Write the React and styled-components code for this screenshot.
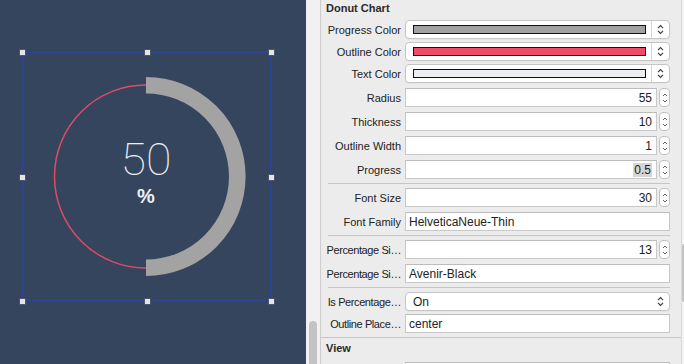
import styled, { createGlobalStyle } from "styled-components";

const GlobalStyle = createGlobalStyle`
  html, body {
    margin: 0;
    padding: 0;
    width: 684px;
    height: 364px;
    overflow: hidden;
  }
  body {
    font-family: "Liberation Sans", Arial, sans-serif;
    color: #262626;
  }
`;

const Window = styled.div`
  display: flex;
  width: 684px;
  height: 364px;
  overflow: hidden;
`;

/* ---------- canvas ---------- */

const Canvas = styled.div`
  width: 306px;
  flex-shrink: 0;
  background: #35455e;
  padding: 52px 0 0 22px;
  box-sizing: border-box;
`;

const Frame = styled.div`
  position: relative;
  width: 249px;
  height: 249px;
  box-shadow: inset 0 0 0 1px #2c4595;
`;

const Handle = styled.span`
  position: absolute;
  left: ${(p) => p.$x}%;
  top: ${(p) => p.$y}%;
  width: 7px;
  height: 7px;
  margin: -3px 0 0 -3px;
  box-sizing: border-box;
  background: #e4e5e8;
  border: 1px solid #4d5566;
`;

const ChartValue = styled.text`
  font-family: Roboto, Lato, "Liberation Sans", sans-serif;
  font-weight: 100;
  font-size: 45px;
  fill: #eef0f3;
`;

const ChartUnit = styled.text`
  font-family: "Liberation Sans", Arial, sans-serif;
  font-weight: 700;
  font-size: 20px;
  fill: #eef0f3;
`;

function Donut() {
  const cx = 124;
  const cy = 124.5;
  const r = 91.3;
  return (
    <svg width="249" height="249" viewBox="0 0 249 249">
      <circle cx={cx} cy={cy} r="91.5" fill="none" stroke="#e14a6b" strokeWidth="1.5" />
      <path
        d={`M${cx} ${cy - r} A${r} ${r} 0 0 1 ${cx} ${cy + r}`}
        fill="none"
        stroke="#a3a3a3"
        strokeWidth="16.6"
      />
      <ChartValue
        x={cx - 25.5}
        y="123"
        textLength="51"
        lengthAdjust="spacingAndGlyphs"
      >
        50
      </ChartValue>
      <ChartUnit x={cx} y="151" textAnchor="middle">
        %
      </ChartUnit>
    </svg>
  );
}

/* ---------- splitter ---------- */

const Strip = styled.div`
  width: 14px;
  flex-shrink: 0;
  background: #f1f1f1;
  border-right: 1px solid #cdcdcd;
  display: flex;
  flex-direction: column;
  align-items: center;
  padding-top: 321px;
`;

const Thumb = styled.div`
  width: 8px;
  flex: 1;
  background: #c3c3c3;
  border-radius: 4px 4px 0 0;
`;

/* ---------- inspector ---------- */

const Panel = styled.div`
  flex: 1;
  display: flex;
  background: #ececec;
`;

const Content = styled.div`
  flex: 1;
  padding: 1px 0 0 5px;
  display: flex;
  flex-direction: column;
  & > * {
    flex-shrink: 0;
  }
`;

const ScrollTrack = styled.div`
  width: 2px;
  background: #f3f3f3;
  border-left: 1px solid #dadada;
  display: flex;
  flex-direction: column;
`;

const ScrollThumb = styled.div`
  margin-top: 244px;
  height: 58px;
  background: #c4c4c4;
  border-radius: 2px 0 0 2px;
`;

const Heading = styled.div`
  font-size: 11px;
  font-weight: 700;
  line-height: 14px;
  color: #2a2a2a;
  margin-top: ${(p) => p.$mt || 0}px;
  margin-bottom: ${(p) => p.$mb || 0}px;
`;

const Section = styled.div`
  display: flex;
  flex-direction: column;
  gap: ${(p) => p.$gap}px;
  margin-top: ${(p) => p.$mt || 0}px;
`;

const Row = styled.div`
  display: grid;
  grid-template-columns: 75px 265px;
  column-gap: 4px;
  align-items: center;
  height: 19px;
`;

const Label = styled.div`
  text-align: right;
  font-size: 11px;
  white-space: nowrap;
  color: #222;
  letter-spacing: ${(p) => (p.$tight ? "-0.4px" : "0")};
`;

const Separator = styled.div`
  height: 1px;
  background: #c6c6c6;
  margin: ${(p) => p.$mt}px ${(p) => (p.$full ? 0 : 11)}px ${(p) => p.$mb}px
    ${(p) => (p.$full ? -5 : 2)}px;
`;

const Popup = styled.div`
  height: 19px;
  box-sizing: border-box;
  display: flex;
  align-items: center;
  background: #fff;
  border: 1px solid #c5c5c5;
  border-radius: 4px;
  box-shadow: 0 0.5px 0 rgba(0, 0, 0, 0.06);
  font-size: 12px;
  color: #222;
`;

const WellArea = styled.div`
  flex: 1;
  align-self: stretch;
  display: flex;
  align-items: center;
  padding: 0 5px 0 7px;
  border-right: 1px solid #d4d4d4;
`;

const Swatch = styled.div`
  flex: 1;
  height: 9px;
  box-sizing: border-box;
  border: 1px solid #111;
  background: ${(p) => p.$color};
`;

const PopupText = styled.span`
  flex: 1;
  padding-left: 7px;
`;

const ArrowBox = styled.div`
  width: 17px;
  display: flex;
  justify-content: center;
  align-items: center;
`;

const Field = styled.div`
  height: 19px;
  box-sizing: border-box;
  display: flex;
  align-items: center;
  justify-content: ${(p) => (p.$right ? "flex-end" : "flex-start")};
  padding: 0 4px 0 3px;
  background: #fff;
  border: 1px solid #c8c8c8;
  border-top-color: #bcbcbc;
  font-size: 12px;
  color: #222;
  white-space: nowrap;
`;

const NumberWrap = styled.div`
  display: flex;
  gap: 2px;
  ${Field} {
    flex: 1;
  }
`;

const Stepper = styled.div`
  width: 11px;
  height: 19px;
  box-sizing: border-box;
  background: #fff;
  border: 1px solid #c2c2c2;
  border-radius: 4px;
  display: flex;
  flex-direction: column;
  justify-content: center;
  align-items: center;
  gap: 2px;
`;

const Selected = styled.span`
  background: #d6d6d6;
  padding: 0 1px;
`;

function UpDown() {
  return (
    <svg width="7" height="11" viewBox="0 0 7 11">
      <path
        d="M1 4.2 L3.5 1.6 L6 4.2 M1 6.8 L3.5 9.4 L6 6.8"
        fill="none"
        stroke="#3a3a3a"
        strokeWidth="1.1"
      />
    </svg>
  );
}

function StepArrow({ down }) {
  return (
    <svg width="6" height="4" viewBox="0 0 6 4">
      <path
        d={down ? "M1 1 L3 3 L5 1" : "M1 3 L3 1 L5 3"}
        fill="none"
        stroke="#555"
        strokeWidth="0.9"
      />
    </svg>
  );
}

function ColorRow({ label, color }) {
  return (
    <Row>
      <Label>{label}</Label>
      <Popup>
        <WellArea>
          <Swatch $color={color} />
        </WellArea>
        <ArrowBox>
          <UpDown />
        </ArrowBox>
      </Popup>
    </Row>
  );
}

function NumberRow({ label, value, selected, tight }) {
  return (
    <Row>
      <Label $tight={tight}>{label}</Label>
      <NumberWrap>
        <Field $right>{selected ? <Selected>{value}</Selected> : value}</Field>
        <Stepper>
          <StepArrow />
          <StepArrow down />
        </Stepper>
      </NumberWrap>
    </Row>
  );
}

function TextRow({ label, value, tight }) {
  return (
    <Row>
      <Label $tight={tight}>{label}</Label>
      <Field>{value}</Field>
    </Row>
  );
}

function SelectRow({ label, value, tight }) {
  return (
    <Row>
      <Label $tight={tight}>{label}</Label>
      <Popup>
        <PopupText>{value}</PopupText>
        <ArrowBox>
          <UpDown />
        </ArrowBox>
      </Popup>
    </Row>
  );
}

const handles = [
  [0, 0],
  [50, 0],
  [100, 0],
  [0, 50],
  [100, 50],
  [0, 100],
  [50, 100],
  [100, 100],
];

export default function App() {
  return (
    <>
      <GlobalStyle />
      <Window>
        <Canvas>
          <Frame>
            <Donut />
            {handles.map(([x, y]) => (
              <Handle key={`${x}-${y}`} $x={x} $y={y} />
            ))}
          </Frame>
        </Canvas>

        <Strip>
          <Thumb />
        </Strip>

        <Panel>
          <Content>
            <Heading $mb={5}>Donut Chart</Heading>

            <Section $gap={3}>
              <ColorRow label="Progress Color" color="#a2a2a2" />
              <ColorRow label="Outline Color" color="#ee4b66" />
              <ColorRow label="Text Color" color="#eceef1" />
            </Section>

            <Section $gap={5} $mt={5}>
              <NumberRow label="Radius" value="55" />
              <NumberRow label="Thickness" value="10" />
              <NumberRow label="Outline Width" value="1" />
              <NumberRow label="Progress" value="0.5" selected />
            </Section>

            <Separator $mt={4} $mb={4} />

            <Section $gap={5}>
              <NumberRow label="Font Size" value="30" />
              <TextRow label="Font Family" value="HelveticaNeue-Thin" />
            </Section>

            <Separator $mt={4} $mb={4} />

            <Section $gap={5}>
              <NumberRow label="Percentage Si…" value="13" tight />
              <TextRow label="Percentage Si…" value="Avenir-Black" tight />
            </Section>

            <Separator $mt={4} $mb={4} />

            <Section $gap={3}>
              <SelectRow label="Is Percentage…" value="On" tight />
              <TextRow label="Outline Place…" value="center" tight />
            </Section>

            <Separator $mt={4} $mb={0} $full />

            <Heading $mt={3} $mb={7}>
              View
            </Heading>
            <Row>
              <span />
              <Field />
            </Row>
          </Content>
          <ScrollTrack>
            <ScrollThumb />
          </ScrollTrack>
        </Panel>
      </Window>
    </>
  );
}
